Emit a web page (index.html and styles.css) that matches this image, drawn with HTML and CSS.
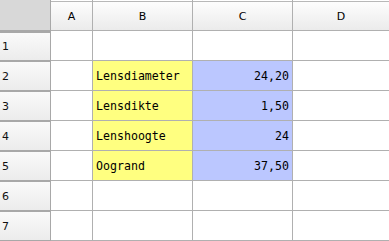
FILE: index.html
```html
<!DOCTYPE html>
<html>
<head>
<meta charset="utf-8">
<link rel="stylesheet" href="styles.css">
</head>
<body>
<div class="sheet">
  <div class="corner"></div>
  <div class="colhead">A</div>
  <div class="colhead">B</div>
  <div class="colhead">C</div>
  <div class="colhead">D</div>

  <div class="rowhead">1</div>
  <div class="cell"></div><div class="cell"></div><div class="cell"></div><div class="cell"></div>

  <div class="rowhead">2</div>
  <div class="cell"></div><div class="cell label">Lensdiameter</div><div class="cell num">24,20</div><div class="cell"></div>

  <div class="rowhead">3</div>
  <div class="cell"></div><div class="cell label">Lensdikte</div><div class="cell num">1,50</div><div class="cell"></div>

  <div class="rowhead">4</div>
  <div class="cell"></div><div class="cell label">Lenshoogte</div><div class="cell num">24</div><div class="cell"></div>

  <div class="rowhead">5</div>
  <div class="cell"></div><div class="cell label">Oogrand</div><div class="cell num">37,50</div><div class="cell"></div>

  <div class="rowhead">6</div>
  <div class="cell"></div><div class="cell"></div><div class="cell"></div><div class="cell"></div>

  <div class="rowhead">7</div>
  <div class="cell"></div><div class="cell"></div><div class="cell"></div><div class="cell"></div>
</div>
</body>
</html>
```

FILE: styles.css
```css
html, body {
  margin: 0;
  padding: 0;
  background: #fff;
}

.sheet {
  display: grid;
  grid-template-columns: 51px 42px 100px 100px 97px;
  grid-template-rows: 31px repeat(7, 30px);
  width: 389px;
}

.sheet > div {
  box-sizing: border-box;
  border-right: 1px solid #b0b0b0;
  border-bottom: 1px solid #b0b0b0;
  display: flex;
  align-items: center;
  overflow: hidden;
  white-space: nowrap;
}

.corner {
  background: #d8d8d8;
  border-right: 1px solid #a8a8a8 !important;
  border-bottom: none !important;
  box-shadow: inset 0 -1px 0 #a8a8a8;
  position: relative;
}

.colhead {
  justify-content: center;
  font-family: "DejaVu Sans", Verdana, sans-serif;
  font-size: 11px;
  color: #000;
  padding-top: 2px;
  background: linear-gradient(#fff 0, #fff 1px, #b8b8b8 1px, #b8b8b8 2px, #fdfdfd 2px, #ebebeb 100%);
}

.rowhead {
  font-family: "DejaVu Sans", Verdana, sans-serif;
  font-size: 11px;
  color: #111;
  padding-left: 2px;
  padding-top: 1px;
  border-right: 1px solid #a8a8a8 !important;
  border-bottom-color: #a8a8a8 !important;
  background: linear-gradient(#a8a8a8 0, #a8a8a8 1px, #fafafa 1px, #ececec 100%);
}

.sheet > .rowhead:nth-child(6) {
  background: linear-gradient(#a8a8a8 0, #a8a8a8 2px, #fafafa 2px, #ececec 100%);
}

.cell {
  font-family: "DejaVu Sans Mono", "Liberation Mono", monospace;
  font-size: 11.6px;
  color: #000;
  background: #fff;
}

.label {
  background: #ffff80;
  padding-left: 3px;
}

.num {
  background: #bbc7ff;
  justify-content: flex-end;
  padding-right: 3px;
}
```
